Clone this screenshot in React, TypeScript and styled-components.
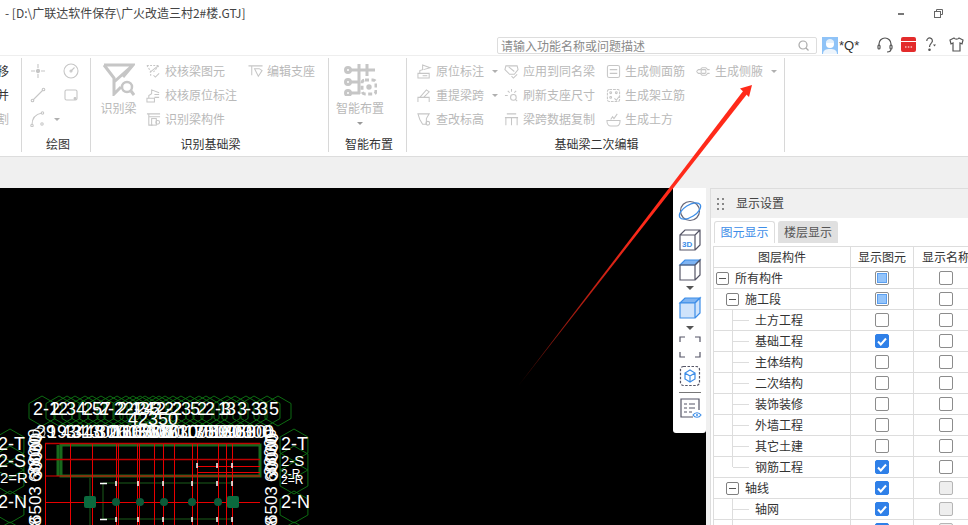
import React, { FC, ReactNode } from 'react';
import styled, { createGlobalStyle } from 'styled-components';

const GlobalStyle = createGlobalStyle`
  html, body {
    margin: 0;
    padding: 0;
    background: #fff;
    overflow: hidden;
  }
  * {
    box-sizing: border-box;
  }
`;

const stroke = '#c6c6c6';

const ribbonIcons: Record<string, ReactNode> = {
  point: (
    <>
      <path d="M8 1v4M8 11v4M1 8h4M11 8h4" />
      <circle cx="8" cy="8" r="1.6" fill={stroke} />
    </>
  ),
  dial: (
    <>
      <circle cx="8" cy="8" r="7" />
      <path d="M8 8l3.5-3.5" />
      <circle cx="8" cy="8" r="1" />
    </>
  ),
  line: (
    <>
      <path d="M3 13L13 3" />
      <circle cx="2.5" cy="13.5" r="1.3" />
      <circle cx="13.5" cy="2.5" r="1.3" />
    </>
  ),
  rect: (
    <>
      <rect x="2" y="3" width="12" height="10" rx="1.5" />
      <circle cx="12" cy="11.5" r="0.9" fill={stroke} />
    </>
  ),
  arc: (
    <>
      <path d="M2 14C2 7 6 3 12 2" />
      <circle cx="2" cy="14.5" r="1.2" />
      <circle cx="12.5" cy="2" r="1.2" />
      <circle cx="12" cy="13" r="1.2" />
    </>
  ),
  checkBeam: (
    <>
      <path d="M1 1.5h13L8 8.5" strokeDasharray="2 1.4" />
      <path d="M1 1.5L5 8v5.5" strokeDasharray="2 1.4" />
      <path d="M4 9l9-7M8 12l2 2 4-4" />
    </>
  ),
  checkMark: (
    <>
      <path d="M1 11h8v4H1zM3 11V8l3-2V2l8 3" />
      <path d="M9 7h5M9 10h5" />
    </>
  ),
  beamPart: (
    <>
      <path d="M1 2h14M3 2v12h4M3 5h12" />
      <rect x="6" y="7" width="5" height="7" />
      <circle cx="12.5" cy="11" r="2" />
    </>
  ),
  edit: (
    <>
      <path d="M0.5 2h15M4 2v10M1.5 2H6" />
      <path d="M7 5l4 8 4-6-3-2z" />
    </>
  ),
  origin: (
    <>
      <path d="M1 10h12v5H1zM3 10V7l3-1V1l8 3-7 2" />
      <path d="M6 12.5h5" />
    </>
  ),
  lift: <path d="M1 15V10h12v5M3 10l7-8 3 2-6 6" />,
  level: (
    <>
      <path d="M1 2h12l-3 5v6H6l-3-5z" />
      <circle cx="11.5" cy="12" r="2" />
    </>
  ),
  apply: (
    <>
      <path d="M2 2h12l1 4-4 5H6L1 6z" />
      <path d="M5 3l6 5M8 13l2 2 4-4" />
    </>
  ),
  refresh: (
    <>
      <path d="M1 8h3M8 1v3M4 3l2 2M13 3l-2 2" />
      <circle cx="10" cy="10" r="3" />
      <path d="M12 12l2 2" />
    </>
  ),
  copy: <path d="M1 6h14M2 6v8M14 6v8M8 6v8M3 2h10" />,
  face: (
    <>
      <rect x="1.5" y="1.5" width="13" height="13" rx="2" />
      <path d="M4 6h8M4 10h8" />
    </>
  ),
  stand: (
    <>
      <rect x="1.5" y="1.5" width="13" height="13" rx="2" strokeDasharray="3 1" />
      <circle cx="5" cy="5" r="1" />
      <circle cx="11" cy="5" r="1" />
      <circle cx="5" cy="10" r="1" />
      <path d="M9 11l2 2 3-4" />
    </>
  ),
  earth: (
    <>
      <path d="M1 9h14c0 4-2 6-4 6H5c-2 0-4-2-4-6z" />
      <path d="M5 8l2-3 1.5 2L12 2" />
    </>
  ),
  armpit: (
    <>
      <path d="M0.5 8l2-2h2l2-2h4l2 2h2" />
      <path d="M0.5 8l2 2h2l2 2h4l2-2h2" />
      <rect x="5.5" y="6" width="5" height="4" rx="1" />
    </>
  ),
};

const Page = styled.div`
  position: relative;
  width: 968px;
  height: 525px;
  overflow: hidden;
  display: flex;
  flex-direction: column;
  background: #fff;
  font-family: 'Noto Sans CJK SC', 'Liberation Sans', sans-serif;
  font-size: 12px;
  color: #333;
`;

const TitleBar = styled.div`
  height: 26px;
  display: flex;
  align-items: center;
  justify-content: space-between;
  padding: 0 25px 0 5px;
  flex: none;
`;

const TitleText = styled.span`
  font-size: 12px;
  color: #444;
  white-space: nowrap;
  margin-bottom: 2px;
`;

const WindowButtons = styled.div`
  display: flex;
  align-items: center;
  gap: 30px;
`;

const SearchRow = styled.div`
  height: 30px;
  flex: none;
  display: flex;
  align-items: flex-start;
  padding-top: 11px;
  padding-left: 497px;
  border-bottom: 1px solid #eee;
`;

const SearchBox = styled.div`
  width: 320px;
  height: 17px;
  display: flex;
  align-items: center;
  justify-content: space-between;
  padding: 0 7px 0 3px;
  border: 1px solid #ddd;
  border-radius: 2px;
  color: #8a8a8a;
  white-space: nowrap;
  span {
    margin-bottom: 1px;
  }
`;

const UserName = styled.span`
  font-family: 'Liberation Sans', sans-serif;
  font-size: 13px;
  color: #333;
  line-height: 17px;
  margin-right: 18px;
`;

const Avatar = styled.svg`
  margin: 0 1px 0 5px;
  flex: none;
`;

const TopIcon = styled.svg<{ $gap: number }>`
  margin-right: ${(props) => props.$gap}px;
  flex: none;
`;

const Ribbon = styled.div`
  height: 101px;
  flex: none;
  display: flex;
  padding-top: 2px;
  border-bottom: 1px solid #ddd;
`;

const Group = styled.div<{ $width: number }>`
  width: ${(props) => props.$width}px;
  height: 94px;
  flex: none;
  display: flex;
  flex-direction: column;
  padding-top: 1px;
  border-right: 1px solid #d8d8d8;
  overflow: hidden;
`;

const GroupBody = styled.div<{ $pad?: number }>`
  height: 72px;
  display: flex;
  padding-left: ${(props) => props.$pad ?? 0}px;
`;

const GroupLabel = styled.div<{ $shift?: number }>`
  margin-top: 3px;
  height: 18px;
  line-height: 20px;
  text-align: center;
  color: #333;
  padding-left: ${(props) => props.$shift ?? 0}px;
`;

const Column = styled.div<{ $width: number }>`
  width: ${(props) => props.$width}px;
  flex: none;
  display: flex;
  flex-direction: column;
`;

const ToolRow = styled.div<{ $dark?: boolean }>`
  height: 24px;
  display: flex;
  align-items: center;
  gap: 4px;
  white-space: nowrap;
  color: ${(props) => (props.$dark ? '#333' : '#b9b9b9')};
  span {
    margin-bottom: 2px;
  }
`;

const CutRow = styled(ToolRow)`
  justify-content: flex-end;
  padding-right: 12px;
`;

const ToolSvg = styled.svg`
  width: 15px;
  height: 15px;
  flex: none;
  fill: none;
  stroke: ${stroke};
  stroke-width: 1.1;
`;

const PlainIcon = styled(ToolSvg)`
  width: 16px;
  height: 16px;
`;

const IconGrid = styled.div`
  display: grid;
  grid-template-columns: 33px 33px;
  grid-auto-rows: 24px;
  align-items: center;
`;

const Caret = styled.i`
  width: 0;
  height: 0;
  margin-left: 4px;
  border-left: 3px solid transparent;
  border-right: 3px solid transparent;
  border-top: 3px solid #b0b0b0;
  flex: none;
`;

const LargeTool = styled.div<{ $width: number }>`
  width: ${(props) => props.$width}px;
  flex: none;
  display: flex;
  flex-direction: column;
  align-items: center;
  color: #b9b9b9;
  line-height: 18px;
`;

const LargeSvg = styled.svg`
  width: 33px;
  height: 34px;
  margin: 3px 0 3px;
  fill: none;
  stroke: ${stroke};
  stroke-width: 3;
`;

const LargeCaret = styled(Caret)`
  margin: 5px 0 0;
  border-top-color: #999;
`;

const Band = styled.div`
  height: 31px;
  flex: none;
  background: #f0f0f0;
`;

const Main = styled.div`
  flex: 1;
  min-height: 0;
  display: flex;
  background: #f0f0f0;
`;

const Canvas = styled.div`
  position: relative;
  width: 706px;
  flex: none;
  background: #000;
  overflow: hidden;
`;

const Drawing = styled.svg`
  display: block;
  width: 706px;
  height: 337px;
  font-family: 'Liberation Sans', sans-serif;
`;

const ViewBar = styled.div`
  position: absolute;
  top: 0;
  right: 0;
  width: 33px;
  height: 245px;
  padding-top: 9px;
  background: #fff;
  border-bottom-left-radius: 3px;
  border-bottom-right-radius: 3px;
  display: flex;
  flex-direction: column;
  align-items: center;
`;

const ViewSvg = styled.svg`
  display: block;
  flex: none;
  fill: none;
  stroke-width: 1.2;
`;

const ViewArrow = styled.div`
  height: 6px;
  flex: none;
  display: flex;
  align-items: center;
  &::before {
    content: '';
    border-left: 4px solid transparent;
    border-right: 4px solid transparent;
    border-top: 4px solid #555;
  }
`;

const ViewDivider = styled.div`
  width: 22px;
  height: 1px;
  margin: 3px 0 0;
  background: #777;
  flex: none;
`;

const Panel = styled.div`
  width: 258px;
  margin-left: 4px;
  flex: none;
  background: #fff;
  border-left: 1px solid #ddd;
  border-top: 1px solid #ddd;
  overflow: hidden;
`;

const PanelHead = styled.div`
  height: 29px;
  background: #f0f0f0;
  display: flex;
  align-items: center;
  gap: 12px;
  padding-left: 6px;
  color: #444;
  span {
    margin-bottom: 2px;
  }
`;

const Grip = styled.div`
  width: 7px;
  display: grid;
  grid-template-columns: 2px 2px;
  column-gap: 3px;
  row-gap: 3px;
  b {
    height: 2px;
    background: #888;
  }
`;

const Tabs = styled.div`
  display: flex;
  gap: 3px;
  padding: 3px 0 0 3px;
  height: 28px;
`;

const Tab = styled.div<{ $active?: boolean }>`
  height: 22px;
  line-height: 19px;
  padding: 0;
  width: ${(props) => (props.$active ? 61 : 60)}px;
  text-align: center;
  border-radius: 3px 3px 0 0;
  border: 1px solid ${(props) => (props.$active ? '#ddd' : '#e0e0e0')};
  border-bottom: none;
  background: ${(props) => (props.$active ? '#fff' : '#e0e0e0')};
  color: ${(props) => (props.$active ? '#3d8ee8' : '#555')};
`;

const Table = styled.div`
  margin-left: 2px;
  border-top: 1px solid #ddd;
  border-left: 1px solid #ddd;
`;

const Row = styled.div`
  height: 21px;
  display: flex;
  border-bottom: 1px solid #ddd;
`;

const NameCell = styled.div<{ $level: number; $leaf?: boolean; $last?: boolean }>`
  position: relative;
  width: 137px;
  flex: none;
  display: flex;
  align-items: center;
  gap: 6px;
  white-space: nowrap;
  padding-left: ${(props) => (props.$leaf ? 41 : props.$level * 10 + 2)}px;
  border-right: 1px solid #ddd;
  span {
    margin-bottom: 2px;
  }
  &::before {
    content: ${(props) => (props.$leaf ? "''" : 'none')};
    position: absolute;
    left: 18px;
    top: -1px;
    height: ${(props) => (props.$last ? 11 : 21)}px;
    border-left: 1px solid #ddd;
  }
  &::after {
    content: ${(props) => (props.$leaf ? "''" : 'none')};
    position: absolute;
    left: 19px;
    top: 10px;
    width: 16px;
    border-top: 1px solid #ddd;
  }
`;

const Expander = styled.i`
  width: 13px;
  height: 13px;
  flex: none;
  border: 1px solid #808080;
  border-radius: 2px;
  display: flex;
  align-items: center;
  justify-content: center;
  &::before {
    content: '';
    width: 7px;
    height: 1px;
    background: #555;
  }
`;

const HeadCell = styled.div<{ $width: number; $line?: boolean }>`
  width: ${(props) => props.$width}px;
  flex: none;
  line-height: 19px;
  text-align: center;
  white-space: nowrap;
  border-right: ${(props) => (props.$line ? '1px solid #ddd' : 'none')};
`;

const BoxCell = styled.div<{ $width: number; $line?: boolean }>`
  width: ${(props) => props.$width}px;
  flex: none;
  display: flex;
  align-items: center;
  justify-content: center;
  border-right: ${(props) => (props.$line ? '1px solid #ddd' : 'none')};
`;

type BoxState = 'off' | 'half' | 'on' | 'disabled';

const Box = styled.i<{ $state: BoxState }>`
  width: 14px;
  height: 14px;
  border-radius: 2px;
  display: flex;
  align-items: center;
  justify-content: center;
  border: 1px solid
    ${(props) =>
      props.$state === 'on'
        ? '#2f80e8'
        : props.$state === 'disabled'
          ? '#b5b5b5'
          : '#8c8c8c'};
  background: ${(props) =>
    props.$state === 'on'
      ? '#2f80e8'
      : props.$state === 'disabled'
        ? '#eeeeee'
        : '#fff'};
`;

const BoxFill = styled.i`
  width: 10px;
  height: 10px;
  background: #94c4fa;
  border: 1px solid #5b9ff0;
`;

const Overlay = styled.svg`
  position: absolute;
  left: 0;
  top: 0;
  pointer-events: none;
`;

const Tool: FC<{ icon: string; text: string; caret?: boolean }> = ({ icon, text, caret }) => (
  <ToolRow>
    <ToolSvg viewBox="0 0 16 16">{ribbonIcons[icon]}</ToolSvg>
    <span>{text}</span>
    {caret && <Caret />}
  </ToolRow>
);

const CheckBox: FC<{ state: BoxState }> = ({ state }) => (
  <Box $state={state}>
    {state === 'half' && <BoxFill />}
    {state === 'on' && (
      <svg width="10" height="9" viewBox="0 0 10 9">
        <path d="M1 4.5l2.8 3L9 1.5" fill="none" stroke="#fff" strokeWidth="2" />
      </svg>
    )}
  </Box>
);

interface LayerRow {
  name: string;
  level: number;
  leaf?: boolean;
  last?: boolean;
  show: BoxState;
  label: BoxState;
}

const layerRows: LayerRow[] = [
  { name: '所有构件', level: 0, show: 'half', label: 'off' },
  { name: '施工段', level: 1, show: 'half', label: 'off' },
  { name: '土方工程', level: 2, leaf: true, show: 'off', label: 'off' },
  { name: '基础工程', level: 2, leaf: true, show: 'on', label: 'off' },
  { name: '主体结构', level: 2, leaf: true, show: 'off', label: 'off' },
  { name: '二次结构', level: 2, leaf: true, show: 'off', label: 'off' },
  { name: '装饰装修', level: 2, leaf: true, show: 'off', label: 'off' },
  { name: '外墙工程', level: 2, leaf: true, show: 'off', label: 'off' },
  { name: '其它土建', level: 2, leaf: true, show: 'off', label: 'off' },
  { name: '钢筋工程', level: 2, leaf: true, last: true, show: 'on', label: 'off' },
  { name: '轴线', level: 1, show: 'on', label: 'disabled' },
  { name: '轴网', level: 2, leaf: true, show: 'on', label: 'disabled' },
  { name: '', level: 2, leaf: true, show: 'on', label: 'disabled' },
];

const hexPoints = (cx: number, cy: number, r: number) =>
  [0, 1, 2, 3, 4, 5]
    .map((i) => {
      const a = (Math.PI / 3) * i - Math.PI / 2;
      return `${(cx + r * Math.cos(a)).toFixed(1)},${(cy + r * Math.sin(a)).toFixed(1)}`;
    })
    .join(' ');

const topLabels: Array<[number, string]> = [
  [33, '2-1'], [50, '2'], [58, '2'], [66, '3'], [76, '4'], [83, '2-2'], [92, '5'], [101, '7'],
  [108, '-2'], [117, '2-1'], [124, '2-3'], [131, '1'], [136, '2-2'], [144, '4'], [150, '5'],
  [156, '2-2'], [164, '2'], [172, '2'], [181, '3'], [190, '5'], [197, '2'], [205, '2-3'],
  [218, '1'], [226, '3'], [237, '3'], [245, '-3'], [258, '3'], [269, '5'],
];

const midLabels: Array<[number, string]> = [
  [36, '29'], [47, '19'], [61, '43'], [66, '34'], [72, '31'], [84, '48'], [90, '300'],
  [96, '300'], [108, '260'], [112, '160'], [122, '165'], [128, '165'], [136, '300'],
  [142, '300'], [150, '880'], [158, '17'], [164, '60'], [168, '630'], [178, '100'],
  [184, '170'], [194, '350'], [198, '750'], [208, '890'], [212, '160'], [222, '300'],
  [226, '980'], [236, '530'], [242, '300'], [264, '0'],
];

const sideLabels: Array<[number, number, number, string]> = [
  [-2, 450, 18, '2-T'],
  [-2, 467, 18, '2-S'],
  [0, 483, 15, '2=R'],
  [-2, 508, 18, '2-N'],
  [281, 450, 18, '2-T'],
  [281, 466, 15, '2-S'],
  [281, 478, 12, '2-R'],
  [281, 484, 12, '2=R'],
  [281, 508, 18, '2-N'],
];

const sideDims: Array<[number, number, string]> = [
  [0, 482, '60030'],
  [-1, 476, '38000'],
  [1, 480, '30000'],
  [0, 524, '6503'],
  [0, 545, '888'],
];

const redV = [45, 70, 92, 116, 118, 137, 139, 154, 163, 174, 192, 197, 218, 226, 232];
const dashXs = [116, 138, 163, 192, 217, 232];

const CadDrawing: FC = () => (
  <Drawing viewBox="0 188 706 337">
    {topLabels.map(([x], i) => (
      <polygon key={i} points={hexPoints(x + 9, 411, 15)} fill="none" stroke="#0d6b12" />
    ))}
    {[445, 462, 478, 507, 538].map((y) => (
      <polygon key={y} points={hexPoints(10, y, 16)} fill="none" stroke="#0d6b12" />
    ))}
    {[445, 462, 478, 507, 538].map((y) => (
      <polygon key={y} points={hexPoints(294, y, 16)} fill="none" stroke="#0d6b12" />
    ))}
    <ellipse cx="39" cy="433" rx="6" ry="5" fill="none" stroke="#ddd" />
    <ellipse cx="272" cy="438" rx="6" ry="4" fill="none" stroke="#ddd" />

    <g fill="none" stroke="#1a5c1a">
      <path d="M90 478v47M103 483v36M103 483h130M103 519h130" />
    </g>
    <rect x="61" y="445" width="199" height="31" fill="none" stroke="#17691c" strokeWidth="3" />
    <path d="M58 445v31" stroke="#17691c" strokeWidth="3" />

    <g stroke="#e80000">
      {redV.map((x) => (
        <path key={x} d={`M${x}.5 443V525`} />
      ))}
      <path d="M45 476h215M45 502.5h215" />
      <path d="M197 466.5h63M197 472.5h63" />
    </g>
    <path d="M45 443.5h215M45 459.5h215" stroke="#c00000" strokeWidth="1.5" />

    <rect x="84" y="496" width="12" height="12" rx="2" fill="#0b6a3e" />
    <rect x="227" y="496" width="12" height="12" rx="2" fill="#0b6a3e" />
    {[116, 140, 164, 192, 218].map((x) => (
      <circle key={x} cx={x} cy="502" r="4" fill="#0b5a38" />
    ))}

    <g stroke="#fff" strokeWidth="1.5">
      {dashXs.map((x) => (
        <path key={x} d={`M${x} 481v5M${x} 517v5`} />
      ))}
      {[197, 217, 232].map((x) => (
        <path key={x} d={`M${x} 463v5`} />
      ))}
      <path d="M100 483.5h7M100 519.5h7" />
    </g>

    <g fill="#fff" fontSize="18">
      {topLabels.map(([x, t], i) => (
        <text key={i} x={x} y="415">
          {t}
        </text>
      ))}
      <text x="128" y="425">
        42350
      </text>
      {midLabels.map(([x, t], i) => (
        <text key={i} x={x} y="438">
          {t}
        </text>
      ))}
      {sideLabels.map(([x, y, size, t], i) => (
        <text key={i} x={x} y={y} fontSize={size}>
          {t}
        </text>
      ))}
      {[41, 277].map((x) =>
        sideDims.map(([dx, y, t]) => (
          <text
            key={`${x}-${y}`}
            transform={`rotate(-90 ${x + dx} ${y})`}
            x={x + dx}
            y={y}
            fontSize="17"
          >
            {t}
          </text>
        )),
      )}
    </g>
  </Drawing>
);

const App: FC = () => {
  return (
    <Page>
      <GlobalStyle />
      <TitleBar>
        <TitleText>- [D:\广联达软件保存\广火改造三村2#楼.GTJ]</TitleText>
        <WindowButtons>
          <svg width="6" height="3" viewBox="0 0 6 3">
            <rect width="6" height="2" y="1" fill="#777" />
          </svg>
          <svg width="9" height="9" viewBox="0 0 9 9" fill="none" stroke="#666">
            <path d="M2.5 2.5V.5h6v5h-2" />
            <rect x=".5" y="2.5" width="6" height="6" />
          </svg>
        </WindowButtons>
      </TitleBar>

      <SearchRow>
        <SearchBox>
          <span>请输入功能名称或问题描述</span>
          <svg width="11" height="11" viewBox="0 0 11 11" fill="none" stroke="#aaa" strokeWidth="1.2">
            <circle cx="5" cy="5" r="4" />
            <path d="M8 8l2.5 2.5" />
          </svg>
        </SearchBox>
        <Avatar width="16" height="17" viewBox="0 0 16 17">
          <rect width="16" height="17" fill="#8fc3f7" />
          <circle cx="8" cy="7" r="4" fill="#fff" />
          <path d="M1 17c0-4 3-5 7-5s7 1 7 5z" fill="#eef5fc" />
          <path d="M4 6c0-3 2-4 4-4s4 1 4 4z" fill="#e4f0fb" />
        </Avatar>
        <UserName>*Q*</UserName>
        <TopIcon $gap={8} width="16" height="16" viewBox="0 0 16 16" fill="none" stroke="#555" strokeWidth="1.2">
          <path d="M2 9V7a6 6 0 0112 0v2" />
          <rect x="1" y="8" width="2" height="4" rx="1" />
          <rect x="13" y="8" width="2" height="4" rx="1" />
          <path d="M14 12c0 2-2 3-4 3" />
        </TopIcon>
        <TopIcon $gap={10} width="15" height="15" viewBox="0 0 15 15">
          <rect width="15" height="15" rx="2" fill="#e32b2b" />
          <rect y="4" width="15" height="1" fill="#fff" />
          <path d="M4 10h1.500M6.800 10h1.500M9.600 10h1.500" stroke="#fff" strokeWidth="1.200" />
        </TopIcon>
        <TopIcon $gap={13} width="10" height="15" viewBox="0 0 10 15" fill="none" stroke="#555" strokeWidth="1.2">
          <path d="M.8 4a2.800 2.800 0 115 1.500C4.800 6.800 3.500 7.500 3.500 10" />
          <circle cx="3.500" cy="12.800" r=".7" fill="#555" />
          <path d="M7 7.500h3l-1.500 2z" fill="#555" stroke="none" />
        </TopIcon>
        <TopIcon $gap={0} width="15" height="15" viewBox="0 0 15 15" fill="none" stroke="#555" strokeWidth="1.2">
          <path d="M5 1L1 3l1 4 2-1v8h7V6l2 1 1-4-4-2c-1 1.500-4 1.500-5 0z" />
        </TopIcon>
      </SearchRow>

      <Ribbon>
        <Group $width={22}>
          <GroupBody>
            <Column $width={21}>
              <CutRow $dark>
                <span>平移</span>
              </CutRow>
              <CutRow $dark>
                <span>合并</span>
              </CutRow>
              <CutRow>
                <span>分割</span>
              </CutRow>
            </Column>
          </GroupBody>
        </Group>

        <Group $width={69}>
          <GroupBody $pad={8}>
            <IconGrid>
              <PlainIcon viewBox="0 0 16 16">{ribbonIcons.point}</PlainIcon>
              <PlainIcon viewBox="0 0 16 16">{ribbonIcons.dial}</PlainIcon>
              <PlainIcon viewBox="0 0 16 16">{ribbonIcons.line}</PlainIcon>
              <PlainIcon viewBox="0 0 16 16">{ribbonIcons.rect}</PlainIcon>
              <ToolRow>
                <PlainIcon viewBox="0 0 16 16">{ribbonIcons.arc}</PlainIcon>
                <Caret />
              </ToolRow>
            </IconGrid>
          </GroupBody>
          <GroupLabel $shift={4}>绘图</GroupLabel>
        </Group>

        <Group $width={238}>
          <GroupBody>
            <LargeTool $width={55}>
              <LargeSvg viewBox="0 0 33 34">
                <path d="M2 3h29L21 15M2 3l10 13v16l7-7M31 3L12 20" />
                <circle cx="25" cy="25" r="5" strokeWidth="2.500" />
                <path d="M29 29l3 4" />
              </LargeSvg>
              <span>识别梁</span>
            </LargeTool>
            <Column $width={102}>
              <Tool icon="checkBeam" text="校核梁图元" />
              <Tool icon="checkMark" text="校核原位标注" />
              <Tool icon="beamPart" text="识别梁构件" />
            </Column>
            <Column $width={70}>
              <Tool icon="edit" text="编辑支座" />
            </Column>
          </GroupBody>
          <GroupLabel $shift={2}>识别基础梁</GroupLabel>
        </Group>

        <Group $width={78}>
          <GroupBody $pad={7}>
            <LargeTool $width={48}>
              <LargeSvg viewBox="0 0 33 34" strokeWidth="2">
                <path d="M7 8h24M7 20h9M7 31h9M15 2v30M23 2v12" />
                <circle cx="4" cy="8" r="2.500" />
                <circle cx="4" cy="20" r="2.500" />
                <circle cx="4" cy="31" r="2.500" />
                <rect x="18" y="18" width="14" height="14" rx="3" strokeDasharray="4 2.500" />
                <circle cx="25" cy="25" r="1.200" fill={stroke} />
              </LargeSvg>
              <span>智能布置</span>
              <LargeCaret />
            </LargeTool>
          </GroupBody>
          <GroupLabel $shift={3}>智能布置</GroupLabel>
        </Group>

        <Group $width={378}>
          <GroupBody $pad={10}>
            <Column $width={87}>
              <Tool icon="origin" text="原位标注" caret />
              <Tool icon="lift" text="重提梁跨" caret />
              <Tool icon="level" text="查改标高" />
            </Column>
            <Column $width={102}>
              <Tool icon="apply" text="应用到同名梁" />
              <Tool icon="refresh" text="刷新支座尺寸" />
              <Tool icon="copy" text="梁跨数据复制" />
            </Column>
            <Column $width={90}>
              <Tool icon="face" text="生成侧面筋" />
              <Tool icon="stand" text="生成架立筋" />
              <Tool icon="earth" text="生成土方" />
            </Column>
            <Column $width={85}>
              <Tool icon="armpit" text="生成侧腋" caret />
            </Column>
          </GroupBody>
          <GroupLabel $shift={2}>基础梁二次编辑</GroupLabel>
        </Group>
      </Ribbon>

      <Band />

      <Main>
        <Canvas>
          <CadDrawing />
          <ViewBar>
            <ViewSvg width="26" height="28" viewBox="0 0 26 28" stroke="#667">
              <circle cx="13" cy="14" r="9.500" />
              <ellipse cx="13" cy="14" rx="12" ry="6" transform="rotate(-32 13 14)" stroke="#3d8ee8" />
            </ViewSvg>
            <ViewSvg width="26" height="30" viewBox="0 0 26 30" stroke="#556">
              <path d="M3 10h15v15H3zM3 10l5-5h15v15l-5 5M18 10l5-5" />
              <text x="5" y="22" fontSize="8" fontWeight="700" fill="#3d8ee8" stroke="none" fontFamily="Liberation Sans, sans-serif">
                3D
              </text>
            </ViewSvg>
            <ViewSvg width="26" height="30" viewBox="0 0 26 30" stroke="#556">
              <path d="M3 10l5-5h15l-5 5z" fill="#7fb4f2" stroke="#3d8ee8" />
              <path d="M3 10h15v15H3zM18 10l5-5v15l-5 5" />
            </ViewSvg>
            <ViewArrow />
            <ViewSvg width="26" height="34" viewBox="0 0 26 34" stroke="#3d8ee8">
              <path d="M3 12l5-5h15l-5 5z" fill="#7fb4f2" />
              <path d="M3 12h15v15H3zM18 12l5-5v15l-5 5" fill="#cfe3fb" />
            </ViewSvg>
            <ViewArrow />
            <ViewSvg width="26" height="32" viewBox="0 0 26 32" stroke="#556">
              <path d="M3 11V6h5M18 6h5v5M23 21v5h-5M8 26H3v-5" />
            </ViewSvg>
            <ViewSvg width="26" height="26" viewBox="0 0 26 26" stroke="#556">
              <rect x="3.500" y="3.500" width="19" height="19" rx="3" strokeDasharray="2.500 1.500" />
              <path d="M13 7l5 3v6l-5 3-5-3v-6zM8 10l5 3 5-3M13 13v6" stroke="#3d8ee8" />
            </ViewSvg>
            <ViewDivider />
            <ViewSvg width="26" height="32" viewBox="0 0 26 32" stroke="#556">
              <path d="M16 24H4V6h18v11" />
              <path d="M7 11h3M12 11h6M7 15h3M12 15h6M7 19h3M12 19h3" />
              <path d="M16 22c2-3 6-3 8 0-2 3-6 3-8 0z" stroke="#3d8ee8" />
              <circle cx="20" cy="22" r="1" fill="#3d8ee8" stroke="none" />
            </ViewSvg>
          </ViewBar>
        </Canvas>

        <Panel>
          <PanelHead>
            <Grip>
              {[0, 1, 2, 3, 4, 5].map((i) => (
                <b key={i} />
              ))}
            </Grip>
            <span>显示设置</span>
          </PanelHead>
          <Tabs>
            <Tab $active>图元显示</Tab>
            <Tab>楼层显示</Tab>
          </Tabs>
          <Table>
            <Row>
              <HeadCell $width={137} $line>
                图层构件
              </HeadCell>
              <HeadCell $width={63} $line>
                显示图元
              </HeadCell>
              <HeadCell $width={64}>显示名称</HeadCell>
            </Row>
            {layerRows.map((row, i) => (
              <Row key={i}>
                <NameCell $level={row.level} $leaf={row.leaf} $last={row.last}>
                  {!row.leaf && <Expander />}
                  {row.name && <span>{row.name}</span>}
                </NameCell>
                <BoxCell $width={63} $line>
                  <CheckBox state={row.show} />
                </BoxCell>
                <BoxCell $width={64}>
                  <CheckBox state={row.label} />
                </BoxCell>
              </Row>
            ))}
          </Table>
        </Panel>
      </Main>

      <Overlay width="968" height="525" viewBox="0 0 968 525">
        <defs>
          <linearGradient id="tail" gradientUnits="userSpaceOnUse" x1="519" y1="385" x2="640" y2="228">
            <stop offset="0" stopColor="#5a0f08" />
            <stop offset="1" stopColor="#ff2a1a" />
          </linearGradient>
        </defs>
        <path d="M519 385L743.500 90.500 747.500 93.500z" fill="url(#tail)" />
        <path d="M752 85L740 88.500 749 97z" fill="#ff2a1a" />
      </Overlay>
    </Page>
  );
};

export default App;
